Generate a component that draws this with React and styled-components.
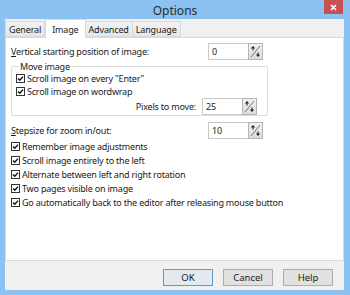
import React from "react";
import styled, { createGlobalStyle } from "styled-components";

const GlobalStyle = createGlobalStyle`
  html, body {
    margin: 0;
    padding: 0;
    background: #8bc2f2;
  }
  body {
    font-family: "Noto Sans", "Open Sans", sans-serif;
    font-size: 9px;
    letter-spacing: -0.2px;
    color: #1a1a1a;
  }
`;

const Window = styled.div`
  width: 350px;
  height: 295px;
  background: #8bc2f2;
  display: flex;
  flex-direction: column;
  box-sizing: border-box;
  overflow: hidden;
`;

const TitleBar = styled.div`
  height: 19px;
  display: grid;
  grid-template-columns: 1fr auto 1fr;
  align-items: start;
  flex-shrink: 0;
`;

const Title = styled.div`
  grid-column: 2;
  font-size: 12px;
  letter-spacing: 0;
  line-height: 12px;
  padding-top: 5px;
  color: #2b2b2b;
`;

const CloseButton = styled.div`
  grid-column: 3;
  justify-self: end;
  margin-right: 7px;
  width: 19px;
  height: 14px;
  background: #c75050;
  display: flex;
  align-items: center;
  justify-content: center;
`;

const Client = styled.div`
  flex: 1;
  margin: 0 6px 5px 5px;
  background: #f0f0f0;
  display: flex;
  flex-direction: column;
`;

const TabStrip = styled.div`
  display: flex;
  height: 18px;
  align-items: flex-end;
`;

const Tab = styled.div`
  box-sizing: border-box;
  height: ${({ active }) => (active ? "19px" : "16px")};
  padding: ${({ active }) => (active ? "1px 6px 0" : "1px 3px 0")};
  margin-bottom: ${({ active }) => (active ? "-1px" : "0")};
  border: 1px solid #d9d9d9;
  border-bottom: ${({ active }) => (active ? "none" : "1px solid #d9d9d9")};
  border-left: ${({ first, active }) => (first || active ? "1px solid #d9d9d9" : "none")};
  background: ${({ active }) => (active ? "#ffffff" : "linear-gradient(#f2f2f2, #e6e6e6)")};
  display: flex;
  align-items: center;
  font-size: 9px;
  letter-spacing: -0.15px;
  position: relative;
  z-index: ${({ active }) => (active ? 1 : 0)};
`;

const Panel = styled.div`
  background: #ffffff;
  border: 1px solid #d9d9d9;
  height: 224px;
  box-sizing: border-box;
  padding: 5px 5px 0 5px;
  display: flex;
  flex-direction: column;
`;

const FieldRow = styled.div`
  display: grid;
  grid-template-columns: ${({ inset }) => (inset ? "186px" : "197px")} auto;
  align-items: center;
  height: ${({ inset }) => (inset ? "16px" : "17px")};
  margin-top: ${({ gap }) => gap || "0"};
`;

const Label = styled.div`
  text-align: ${({ right }) => (right ? "right" : "left")};
  padding-right: ${({ right }) => (right ? "6px" : "0")};
  white-space: nowrap;
  line-height: 11px;
`;

const Spinner = styled.div`
  display: flex;
  height: 17px;
`;

const SpinInput = styled.div`
  box-sizing: border-box;
  width: 40px;
  height: 17px;
  border: 1px solid #c8c8c8;
  border-right: none;
  background: #fff;
  padding-left: 3px;
  display: flex;
  align-items: center;
  color: #202020;
`;

const SpinButton = styled.div`
  box-sizing: border-box;
  width: 15px;
  height: 17px;
  border: 1px solid #b4b4b4;
  background: linear-gradient(#f0f0f0, #dcdcdc);
  display: flex;
  align-items: center;
  justify-content: center;
`;

const Group = styled.fieldset`
  margin: 2px 0 0 0;
  width: 257px;
  box-sizing: border-box;
  border: 1px solid #dcdcdc;
  border-radius: 2px;
  padding: 0 4px 1px 4px;
  min-width: 0;
`;

const Legend = styled.legend`
  padding: 0 1px;
  margin-left: 3px;
  line-height: 9px;
`;

const CheckRow = styled.div`
  display: flex;
  align-items: center;
  gap: 2px;
  height: ${({ tight }) => (tight ? "13px" : "14px")};
  margin-top: ${({ lead }) => (lead ? "1px" : "0")};
  line-height: 11px;
  white-space: nowrap;
`;

const CheckList = styled.div`
  display: flex;
  flex-direction: column;
`;

const Footer = styled.div`
  flex: 1;
  display: flex;
  justify-content: flex-end;
  align-items: flex-start;
  gap: 10px;
  padding: 8px 11px 0 0;
`;

const Button = styled.div`
  box-sizing: border-box;
  width: 50px;
  height: 17px;
  border: 1px solid ${({ primary }) => (primary ? "#5c9ad6" : "#acacac")};
  background: ${({ primary }) => (primary ? "#e4e9ef" : "#e1e1e1")};
  display: flex;
  align-items: center;
  justify-content: center;
  font-size: 9.5px;
  letter-spacing: 0;
  color: #1a1a1a;
`;

const Key = styled.span`
  text-decoration: underline;
`;

function CheckBox() {
  return (
    <svg width="9" height="9" viewBox="0 0 9 9" style={{ flexShrink: 0 }}>
      <rect x="0.5" y="0.5" width="8" height="8" fill="#fff" stroke="#333" />
      <path d="M2 4.5 L3.8 6.3 L7 2.6" fill="none" stroke="#111" strokeWidth="1.4" />
    </svg>
  );
}

function SpinIcon() {
  return (
    <svg width="11" height="13" viewBox="0 0 11 13">
      <line x1="1" y1="12" x2="10" y2="1" stroke="#555" strokeWidth="0.8" />
      <path d="M3 1 L5 3.5 L1 3.5 Z" fill="#111" />
      <rect x="2.5" y="3.5" width="1" height="2" fill="#111" />
      <path d="M8 12 L10 9.5 L6 9.5 Z" fill="#111" />
      <rect x="7.5" y="7.5" width="1" height="2" fill="#111" />
    </svg>
  );
}

function SpinField({ value }) {
  return (
    <Spinner>
      <SpinInput>{value}</SpinInput>
      <SpinButton>
        <SpinIcon />
      </SpinButton>
    </Spinner>
  );
}

export default function App() {
  const options = [
    "Remember image adjustments",
    "Scroll image entirely to the left",
    "Alternate between left and right rotation",
    "Two pages visible on image",
    "Go automatically back to the editor after releasing mouse button",
  ];
  return (
    <>
      <GlobalStyle />
      <Window>
        <TitleBar>
          <Title>Options</Title>
          <CloseButton>
            <svg width="7" height="7" viewBox="0 0 7 7">
              <path d="M1 1 L6 6 M6 1 L1 6" stroke="#fff" strokeWidth="1.6" />
            </svg>
          </CloseButton>
        </TitleBar>
        <Client>
          <TabStrip>
            <Tab first>General</Tab>
            <Tab active>Image</Tab>
            <Tab>Advanced</Tab>
            <Tab>Language</Tab>
          </TabStrip>
          <Panel>
            <FieldRow>
              <Label>
                <Key>V</Key>ertical starting position of image:
              </Label>
              <SpinField value="0" />
            </FieldRow>
            <Group>
              <Legend>Move image</Legend>
              <CheckRow tight lead>
                <CheckBox />
                Scroll image on every "Enter"
              </CheckRow>
              <CheckRow tight>
                <CheckBox />
                Scroll image on wordwrap
              </CheckRow>
              <FieldRow inset>
                <Label right>Pixels to move:</Label>
                <SpinField value="25" />
              </FieldRow>
            </Group>
            <FieldRow gap="6px">
              <Label>
                <Key>S</Key>tepsize for zoom in/out:
              </Label>
              <SpinField value="10" />
            </FieldRow>
            <CheckList>
              {options.map((o) => (
                <CheckRow key={o}>
                  <CheckBox />
                  {o}
                </CheckRow>
              ))}
            </CheckList>
          </Panel>
          <Footer>
            <Button primary>OK</Button>
            <Button>Cancel</Button>
            <Button>Help</Button>
          </Footer>
        </Client>
      </Window>
    </>
  );
}
